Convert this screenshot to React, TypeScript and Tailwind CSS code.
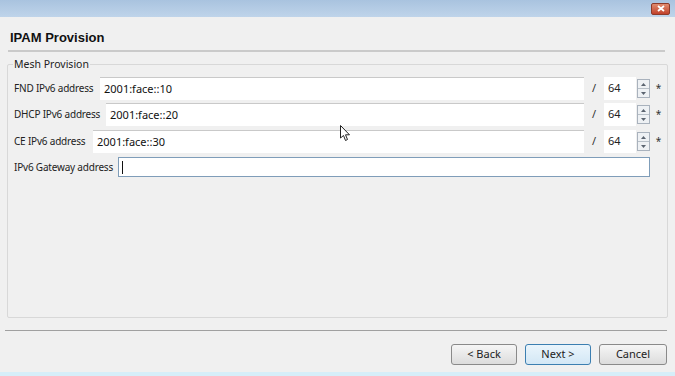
import React from 'react'

const font = { fontFamily: '"Noto Sans", "DejaVu Sans", sans-serif' }

function Spinner() {
  return (
    <div className="flex flex-col w-[13px] h-[19px] border border-[#a9b2bd] bg-[#eef1f4] ml-[1px] shrink-0">
      <div className="flex-1 flex items-center justify-center border-b border-[#b8c0c8]">
        <svg width="5" height="3" viewBox="0 0 5 3"><path d="M0 3 L2.5 0 L5 3 Z" fill="#5b6470" /></svg>
      </div>
      <div className="flex-1 flex items-center justify-center">
        <svg width="5" height="3" viewBox="0 0 5 3"><path d="M0 0 L2.5 3 L5 0 Z" fill="#5b6470" /></svg>
      </div>
    </div>
  )
}

function Row({ label, value, labelW, mt }: { label: string; value: string; labelW: string; mt: string }) {
  return (
    <div className={`flex items-center h-[23px] ${mt}`}>
      <span className={`text-[10px] tracking-[-0.2px] text-[#222] whitespace-nowrap shrink-0 ${labelW}`}>{label}</span>
      <div className="flex-1 h-[23px] bg-white border-t border-[#c9c9c9] flex items-center pl-[4px] text-[11px] text-[#111]">{value}</div>
      <span className="w-[20px] shrink-0 text-center text-[11px] text-[#333]">/</span>
      <div className="w-[32px] shrink-0 h-[23px] bg-white flex items-center pl-[4px] text-[11px] text-[#222]">64</div>
      <Spinner />
      <span className="w-[17px] shrink-0 text-center text-[10px] text-[#333]">*</span>
    </div>
  )
}

export default function App() {
  return (
    <div className="w-[675px] h-[376px] bg-[#f0f0f0] flex flex-col relative overflow-hidden" style={font}>
      <div className="h-[17px] bg-gradient-to-b from-[#a9c3df] to-[#bfd4ea] flex justify-end items-center pr-[5px]">
        <div className="w-[19px] h-[12px] rounded-[2px] bg-gradient-to-b from-[#e08a6e] to-[#c0402a] border border-[#8c3a2a] flex items-center justify-center">
          <svg width="8" height="7" viewBox="0 0 8 7"><path d="M1 1 L7 6 M7 1 L1 6" stroke="#fff" strokeWidth="1.8" /></svg>
        </div>
      </div>
      <div className="px-[10px] pt-[11px] h-[33px] text-[13px] font-bold text-[#111]" style={{ fontFamily: '"Liberation Sans", Arial, sans-serif' }}>IPAM Provision</div>
      <div className="ml-[8px] mr-[10px] h-[2px] bg-[#cacaca]" />
      <div className="relative mx-[7px] mt-[12px] h-[254px] border border-[#d8d8d8] rounded-[2px] pl-[6px] pt-[12px]">
        <span className="absolute left-[5px] top-[-8px] bg-[#f0f0f0] px-[1px] text-[10.5px] text-[#222]">Mesh Provision</span>
        <Row label="FND IPv6 address" value="2001:face::10" labelW="w-[86px]" mt="mt-0" />
        <Row label="DHCP IPv6 address" value="2001:face::20" labelW="w-[92px]" mt="mt-[3px]" />
        <Row label="CE IPv6 address" value="2001:face::30" labelW="w-[79px]" mt="mt-[4px]" />
        <div className="flex items-center h-[20px] mt-[4px]">
          <span className="w-[104px] shrink-0 whitespace-nowrap text-[10px] tracking-[-0.2px] text-[#222]">IPv6 Gateway address</span>
          <div className="w-[532px] h-[20px] bg-white border border-[#7f9db9] flex items-center pl-[3px]">
            <div className="w-px h-[13px] bg-[#111]" />
          </div>
        </div>
      </div>
      <div className="ml-[5px] mr-[8px] mt-[12px] h-px bg-[#a0a0a0]" />
      <div className="flex justify-end gap-[8px] pr-[8px] mt-[13px]">
        <button className="w-[66px] h-[21px] rounded-[3px] border border-[#8a8a8a] bg-gradient-to-b from-[#f6f6f6] to-[#dcdcdc] text-[11px] text-[#222]">&lt; Back</button>
        <button className="w-[66px] h-[21px] rounded-[3px] border border-[#3c7fb1] bg-gradient-to-b from-[#eaf5fc] to-[#d3e7f5] text-[11px] text-[#222]">Next &gt;</button>
        <button className="w-[68px] h-[21px] rounded-[3px] border border-[#8a8a8a] bg-gradient-to-b from-[#f6f6f6] to-[#dcdcdc] text-[11px] text-[#222]">Cancel</button>
      </div>
      <div className="mt-auto h-[4px] bg-[#d6eef9]" />
      <svg className="absolute left-[340px] top-[125px]" width="11" height="17" viewBox="0 0 11 17">
        <path d="M0.5 0.5 L0.5 13 L3.5 10.5 L5.5 15.5 L7.5 14.5 L5.5 9.8 L9.5 9.8 Z" fill="#fff" stroke="#222" strokeWidth="1" />
      </svg>
    </div>
  )
}
